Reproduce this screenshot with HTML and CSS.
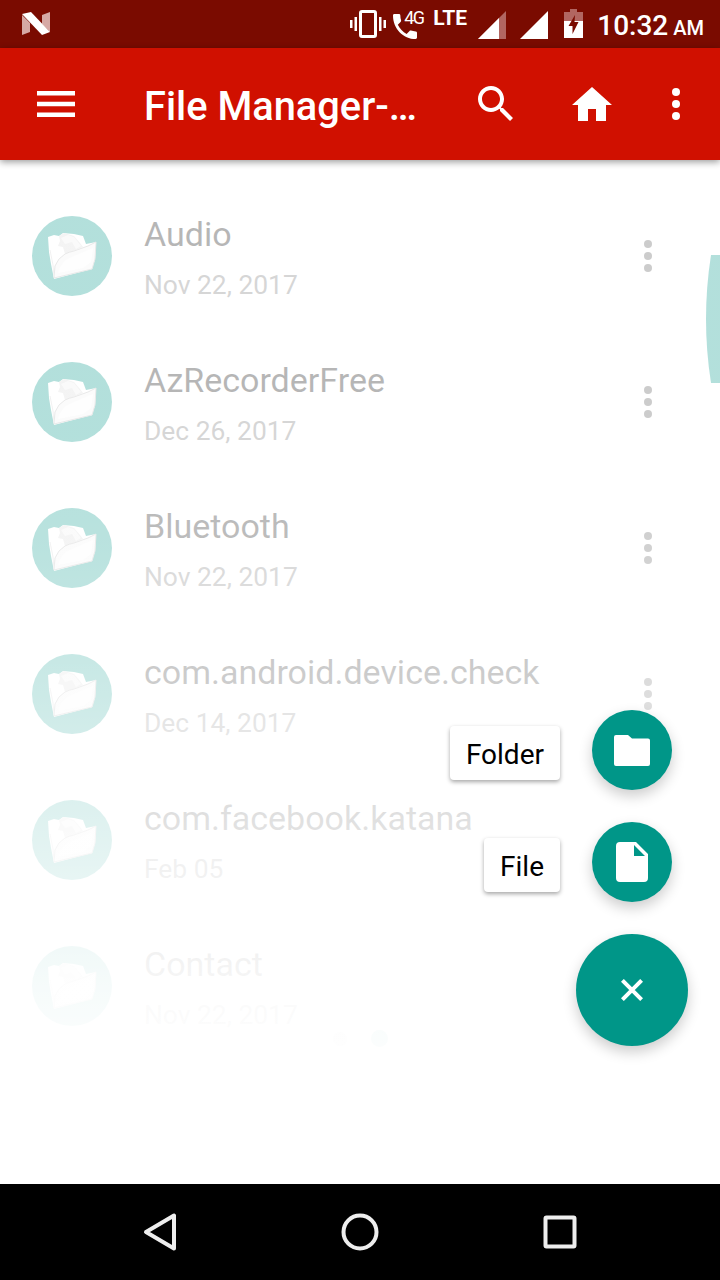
FILE: index.html
```html
<!DOCTYPE html>
<html lang="en">
<head>
	<meta charset="UTF-8">
	<title>File Manager</title>
	<link rel="stylesheet" href="styles.css">
</head>
<body>
	<!-- shared icons -->
	<svg class="defs" width="0" height="0">
		<symbol id="more" viewBox="0 0 8 32">
			<circle cx="4" cy="4" r="4"/><circle cx="4" cy="16" r="4"/><circle cx="4" cy="28" r="4"/>
		</symbol>
		<symbol id="open-folder" viewBox="0 0 80 80">
			<path fill="#fff" d="M16 21l6-2 5 1 4-3 11 1 9 2 3 8 10-2-1 17-3 10-38 10-3-15-2-12z"/>
			<path fill="#d9d9d9" d="M27 20l5-3 10 3 6 7 3 4-10 4-8 3-2-7-5-1 2-5z"/>
			<path fill="#efefef" d="M29 22l7-3 6 2 7 9-5 3-4-7-7 2z"/>
			<path fill="#f3f3f3" stroke="#b5b5b5" stroke-width="1" d="M22 62l1-12q3-8 10-12 4-2 9-3l14-5 8-4-1 17-3 10z"/>
			<path fill="#fcfcfc" d="M26 57q3-12 14-16l21-9-2 14-8 6z"/>
			<path fill="none" stroke="#d2d2d2" stroke-width="1" d="M18 34l3 15 1 12"/>
		</symbol>
	</svg>

	<div class="phone">
		<div class="status">
			<svg class="android-n" width="28" height="24" viewBox="0 0 28 24">
				<path fill="#d6a9a5" d="M0 3l8 8v9l-8 3zM20 3l8-3v20l-8-8z"/>
				<path fill="#fff" d="M0 2l9-2 19 20-8 3z"/>
			</svg>
			<svg class="vibrate" width="36" height="28" viewBox="0 0 36 28">
				<rect x="10.500" y="1.500" width="15" height="25" rx="1.500" fill="none" stroke="#fff" stroke-width="3"/>
				<path fill="#fff" d="M0 10h2.500v8h-2.500zM4.500 7h2.500v14h-2.500zM29 7h2.500v14h-2.500zM33.500 10h2.500v8h-2.500z"/>
			</svg>
			<div class="call">
				<svg width="24" height="25" viewBox="3 3 18 18" preserveAspectRatio="none">
					<path fill="#fff" d="M6.620 10.790c1.440 2.830 3.760 5.140 6.590 6.590l2.200-2.200c.27-.27.67-.36 1.020-.24 1.120.37 2.330.57 3.570.57.55 0 1 .45 1 1V20c0 .55-.45 1-1 1-9.390 0-17-7.610-17-17 0-.55.45-1 1-1h3.500c.55 0 1 .45 1 1 0 1.250.2 2.450.57 3.570.11.35.03.74-.25 1.020z"/>
				</svg>
				<span class="net">4G</span>
			</div>
			<span class="lte">LTE</span>
			<svg class="signal" width="28" height="28" viewBox="0 0 28 28">
				<path fill="#b26661" d="M0 28L28 0v28z"/>
				<path fill="#fff" d="M0 28L21 7v21z"/>
			</svg>
			<svg class="signal" width="28" height="28" viewBox="0 0 28 28">
				<path fill="#fff" d="M0 28L28 0v28z"/>
			</svg>
			<svg class="battery" width="19" height="29" viewBox="0 0 19 29">
				<path fill="#b26661" d="M0 3h6v-3h7v3h6v10h-19z"/>
				<path fill="#fff" d="M0 12h19v17h-19z"/>
				<path fill="#7a0b00" d="M11 6l-6.500 11h4v8l6-12h-4z"/>
			</svg>
			<span class="time">10:32 <small>AM</small></span>
		</div>

		<div class="toolbar">
			<svg class="menu" width="38" height="26" viewBox="0 0 38 26">
				<path fill="#fff" d="M0 0h38v4.400h-38zM0 10.800h38v4.400h-38zM0 21.600h38v4.400h-38z"/>
			</svg>
			<h1>File Manager-…</h1>
			<svg class="search" width="35" height="35" viewBox="3 3 17.490 17.490">
				<path fill="#fff" d="M15.500 14h-.79l-.28-.27C15.410 12.590 16 11.110 16 9.500 16 5.910 13.090 3 9.500 3S3 5.910 3 9.500 5.910 16 9.500 16c1.610 0 3.090-.59 4.230-1.570l.27.28v.79l5 4.990L20.490 19l-4.990-5zm-6 0C7.010 14 5 11.990 5 9.500S7.010 5 9.500 5 14 7.010 14 9.500 11.990 14 9.500 14z"/>
			</svg>
			<svg class="home" width="40" height="34" viewBox="2 3 20 17">
				<path fill="#fff" d="M10 20v-6h4v6h5v-8h3L12 3 2 12h3v8z"/>
			</svg>
			<svg class="more" width="8" height="32"><use href="#more"/></svg>
		</div>

		<div class="content">
			<div class="list">
				<div class="row">
					<div class="avatar"><svg width="80" height="80"><use href="#open-folder"/></svg></div>
					<div class="text"><div class="name">Audio</div><div class="date">Nov 22, 2017</div></div>
					<svg class="dots" width="8" height="32"><use href="#more"/></svg>
				</div>
				<div class="row">
					<div class="avatar"><svg width="80" height="80"><use href="#open-folder"/></svg></div>
					<div class="text"><div class="name">AzRecorderFree</div><div class="date">Dec 26, 2017</div></div>
					<svg class="dots" width="8" height="32"><use href="#more"/></svg>
				</div>
				<div class="row">
					<div class="avatar"><svg width="80" height="80"><use href="#open-folder"/></svg></div>
					<div class="text"><div class="name">Bluetooth</div><div class="date">Nov 22, 2017</div></div>
					<svg class="dots" width="8" height="32"><use href="#more"/></svg>
				</div>
				<div class="row">
					<div class="avatar"><svg width="80" height="80"><use href="#open-folder"/></svg></div>
					<div class="text"><div class="name">com.android.device.check</div><div class="date">Dec 14, 2017</div></div>
					<svg class="dots" width="8" height="32"><use href="#more"/></svg>
				</div>
				<div class="row">
					<div class="avatar"><svg width="80" height="80"><use href="#open-folder"/></svg></div>
					<div class="text"><div class="name">com.facebook.katana</div><div class="date">Feb 05</div></div>
				</div>
				<div class="row">
					<div class="avatar"><svg width="80" height="80"><use href="#open-folder"/></svg></div>
					<div class="text"><div class="name">Contact</div><div class="date">Nov 22, 2017</div></div>
				</div>
			</div>
			<svg class="handle" width="14" height="128" viewBox="0 0 14 128">
				<path fill="#009688" d="M14 0H5Q-5 64 5 128h9z"/>
			</svg>
			<div class="pager"><i></i><i class="on"></i></div>
			<div class="fade"></div>

			<div class="actions">
				<div class="action">
					<span class="label">Folder</span>
					<div class="mini">
						<svg width="36" height="31" viewBox="0 0 36 31">
							<path fill="#fff" d="M2 0h12l4 3.500h16a2 2 0 0 1 2 2V29a2 2 0 0 1-2 2H2a2 2 0 0 1-2-2V2a2 2 0 0 1 2-2z"/>
						</svg>
					</div>
				</div>
				<div class="action">
					<span class="label">File</span>
					<div class="mini">
						<svg width="32" height="40" viewBox="0 0 32 40">
							<path fill="#fff" d="M4 0h16l12 12v24a4 4 0 0 1-4 4H4a4 4 0 0 1-4-4V4a4 4 0 0 1 4-4zM18 3v11h11z"/>
						</svg>
					</div>
				</div>
				<div class="fab">
					<svg width="22" height="22" viewBox="0 0 22 22">
						<path stroke="#fff" stroke-width="4" d="M1.400 1.400l19.200 19.200M20.600 1.400L1.400 20.600"/>
					</svg>
				</div>
			</div>
		</div>

		<div class="navbar">
			<svg width="40" height="40" viewBox="0 0 40 40"><path d="M34 3.500v33L6 20z"/></svg>
			<svg width="40" height="40" viewBox="0 0 40 40"><circle cx="20" cy="20" r="16.500"/></svg>
			<svg width="40" height="40" viewBox="0 0 40 40"><rect x="5.500" y="5.500" width="29" height="29" rx="1"/></svg>
		</div>
	</div>
</body>
</html>
```
FILE: styles.css
```css
html,body{
	padding: 0;
	margin: 0;
}
body {
	font-family: Roboto, "Liberation Sans", sans-serif;
	background: #fff;
}
svg {
	display: block;
	flex: none;
}
.defs {
	position: absolute;
}
.phone {
	display: grid;
	grid-template-rows: 48px 112px 1fr 96px;
	width: 720px;
	height: 1280px;
	overflow: hidden;
}

/* status bar */
.status {
	display: flex;
	align-items: flex-start;
	box-sizing: border-box;
	padding: 0 16px 0 22px;
	background: #7a0b00;
	color: #fff;
	white-space: nowrap;
}
.android-n {
	margin-top: 12px;
}
.vibrate {
	margin: 10px 7px 0 auto;
}
.call {
	display: flex;
	width: 40px;
	padding-top: 14px;
}
.net {
	margin: -6px 0 0 -13px;
	font-size: 18px;
	line-height: 20px;
	letter-spacing: -1.500px;
}
.lte {
	width: 45px;
	font-size: 21px;
	font-weight: 700;
	line-height: 36px;
}
.signal {
	margin: 11px 14px 0 0;
}
.battery {
	margin: 9px 14px 0 2px;
}
.time {
	font-size: 28px;
	font-weight: 500;
	line-height: 51px;
	word-spacing: -2px;
}
.time small {
	font-size: 20px;
}

/* toolbar */
.toolbar {
	display: flex;
	align-items: center;
	box-sizing: border-box;
	padding: 0 40px 0 37px;
	background: #d01000;
	box-shadow: 0 2px 7px rgba(0,0,0,.4);
	z-index: 1;
}
.toolbar h1 {
	width: 334px;
	margin: 4px 0 0 69px;
	color: #fff;
	font-size: 39.800px;
	font-weight: 500;
	white-space: nowrap;
}
.menu, .search {
	margin-bottom: 1px;
}
.home {
	margin: 0 0 1px 59px;
}
.more {
	margin-left: auto;
	fill: #fff;
}

/* file list */
.content {
	position: relative;
	overflow: hidden;
}
.list {
	padding-top: 23px;
}
.row {
	display: flex;
	align-items: center;
	height: 146px;
	padding: 0 68px 0 32px;
}
.avatar {
	width: 80px;
	height: 80px;
	border-radius: 50%;
	background: #009688;
}
.text {
	flex: 1;
	margin-left: 32px;
	padding-top: 7px;
}
.name {
	color: #0a0a0a;
	font-size: 34px;
	line-height: 50px;
}
.date {
	color: #757575;
	font-size: 26.400px;
	line-height: 52px;
}
.dots {
	fill: #555;
}
.handle {
	position: absolute;
	top: 95px;
	right: 0;
}
.pager {
	position: absolute;
	top: 870px;
	left: 333px;
	display: flex;
	align-items: center;
	gap: 24px;
}
.pager i {
	width: 14px;
	height: 14px;
	border-radius: 50%;
	background: #bbb;
}
.pager .on {
	width: 17px;
	height: 17px;
	background: #009688;
}
/* white veil under the open action menu */
.fade {
	position: absolute;
	top: 0;
	right: 0;
	bottom: 0;
	left: 0;
	background: linear-gradient(rgba(255,255,255,.7) 270px, rgba(255,255,255,.73) 388px, rgba(255,255,255,.8) 534px, rgba(255,255,255,.885) 680px, rgba(255,255,255,.965) 826px, rgba(255,255,255,.98) 875px, #fff 920px);
}

/* floating actions */
.actions {
	position: absolute;
	top: 550px;
	right: 32px;
	display: flex;
	flex-direction: column;
	align-items: flex-end;
	gap: 32px;
}
.action {
	display: flex;
	align-items: center;
	gap: 32px;
	padding-right: 16px;
}
.label {
	box-sizing: border-box;
	height: 54px;
	margin-top: 6px;
	padding: 0 16px;
	border-radius: 4px;
	background: #fff;
	box-shadow: 0 2px 4px rgba(0,0,0,.35);
	color: #000;
	font-size: 28px;
	line-height: 57px;
}
.mini, .fab {
	display: flex;
	align-items: center;
	justify-content: center;
	width: 80px;
	height: 80px;
	border-radius: 50%;
	background: #009688;
	box-shadow: 0 6px 14px rgba(0,0,0,.2);
}
.fab {
	width: 112px;
	height: 112px;
}

/* navigation bar */
.navbar {
	display: flex;
	align-items: center;
	justify-content: center;
	gap: 160px;
	background: #000;
	fill: none;
	stroke: #eee;
	stroke-width: 4;
	stroke-linejoin: round;
}
```
